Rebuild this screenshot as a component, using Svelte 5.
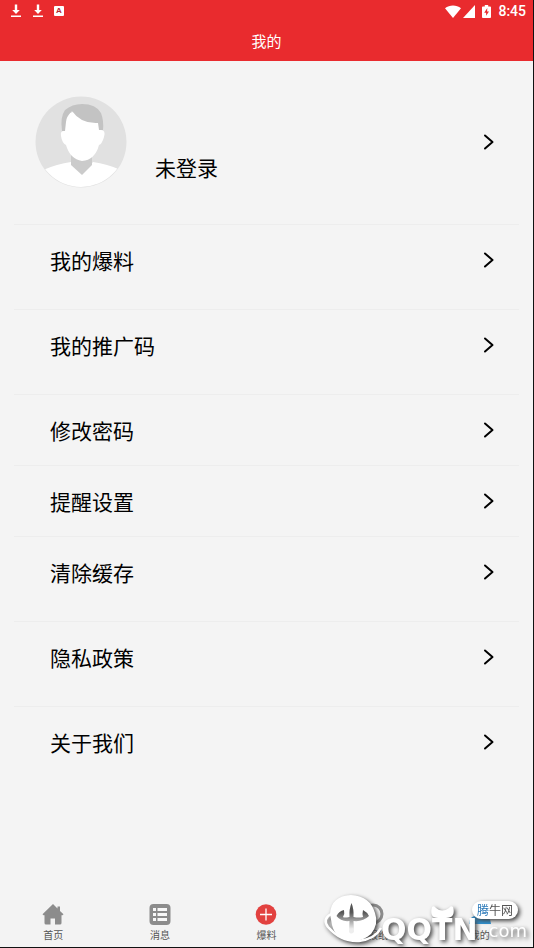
<script lang="ts">
    const groups = [
        ['我的爆料'],
        ['我的推广码'],
        ['修改密码', '提醒设置', '清除缓存'],
        ['隐私政策'],
        ['关于我们']
    ];
</script>

{#snippet chevron()}
    <svg class="chevron" viewBox="0 0 12 16" aria-hidden="true">
        <path d="M2 1.5 L9.5 8 L2 14.5" fill="none" stroke="#000" stroke-width="2" stroke-linecap="round" stroke-linejoin="round" />
    </svg>
{/snippet}

{#snippet download()}
    <svg width="12" height="14" viewBox="0 0 12 14" aria-hidden="true">
        <path d="M4.8 0.5h2.4v5.5h2.6L6 10 2.2 6h2.6zM1 11.5h10V13H1z" fill="#fff" />
    </svg>
{/snippet}

<div class="screen">
    <header>
        <div class="status">
            <div class="status-left">
                {@render download()}
                {@render download()}
                <span class="badge">A</span>
            </div>
            <div class="status-right">
                <svg width="16" height="13" viewBox="0 0 16 13"><path d="M0 3.2C4.6-.4 11.4-.4 16 3.2L8 13z" fill="#fff" /></svg>
                <svg width="12" height="13" viewBox="0 0 12 13"><path d="M12 0v13H0z" fill="#fff" /></svg>
                <svg class="battery" width="9" height="13" viewBox="0 0 9 13">
                    <path d="M2.8 0h3.4v1.4h1.9q.9 0 .9.9v9.8q0 .9-.9.9H.9q-.9 0-.9-.9V2.3q0-.9.9-.9h1.9z" fill="#fff" />
                    <path d="M5.3 3L2.2 7.7h1.9v3L7 6.4H5.1z" fill="#e92b2e" />
                </svg>
                <span class="time">8:45</span>
            </div>
        </div>
        <h1>我的</h1>
    </header>

    <main>
        <button class="profile">
            <svg class="avatar" viewBox="0 0 92 92" aria-hidden="true">
                <clipPath id="face"><circle cx="46" cy="46" r="45" /></clipPath>
                <circle cx="46" cy="46" r="45.5" fill="#e1e1e1" />
                <g clip-path="url(#face)">
                    <path d="M8 74 Q22 68 36 66 L47 78 L58 66 Q72 68 86 74 L80 92 H10z" fill="#fff" />
                    <path d="M36 55 H57 V69 L47 79 L36 69z" fill="#cbcbcb" />
                    <path d="M30 20 Q47 8 65 22 L66 34 Q71 34 69 41 Q67 48 64 49 Q60 64 47 65 Q35 63 31 49 Q27 47 26 40 Q25 35 29 35z" fill="#fff" />
                    <path d="M27 35 Q25 21 30 14 Q37 8 47 8 Q61 8 66 17 Q69 25 68 34 H64 L63 27 Q46 28 37 15 Q31 21 31 26 L30 35z" fill="#c3c3c3" />
                </g>
            </svg>
            <span class="user">未登录</span>
            {@render chevron()}
        </button>

        {#each groups as group}
            <div class="group">
                {#each group as label}
                    <button class="row">
                        <span>{label}</span>
                        {@render chevron()}
                    </button>
                {/each}
            </div>
        {/each}
    </main>

    <nav>
        <a href="#home">
            <svg viewBox="0 0 22 22"><path d="M11 1L.5 11.3l1 1H2.500V20q0 1.500 1.500 1.500h4.500V15.500h4.500v6H18q1.500 0 1.500-1.500v-7.700h1l1-1L18 8V3.500h-2.500v2z" fill="#8c8c8c" /></svg>
            <span>首页</span>
        </a>
        <a href="#news">
            <svg viewBox="0 0 22 22">
                <rect x="0.5" y="1" width="21" height="21" rx="4" fill="#8c8c8c" />
                <path d="M4 5h3v3H4zM8.5 5h9.5v3H8.500zM4 10h3v3H4zM8.500 10h9.500v3H8.500zM4 15h3v3H4zM8.500 15h9.500v3H8.500z" fill="#f8f8f8" />
            </svg>
            <span>消息</span>
        </a>
        <a href="#report">
            <svg viewBox="0 0 22 22">
                <circle cx="11" cy="11.5" r="10.3" fill="#e2413f" />
                <path d="M11 5.5v12M5 11.5h12" stroke="#fff" stroke-width="1.3" />
            </svg>
            <span>爆料</span>
        </a>
        <a href="#paper">
            <svg viewBox="0 0 22 22"><circle cx="11" cy="11" r="9" fill="none" stroke="#8c8c8c" stroke-width="3" /></svg>
            <span>读报纸</span>
        </a>
        <a href="#me">
            <svg viewBox="0 0 22 22"><path d="M0 21Q0 12 11 12T22 21z" fill="#2e94d6" /><circle cx="11" cy="9" r="6" fill="#2e94d6" /></svg>
            <span>我的</span>
        </a>
    </nav>

    <div class="watermark">
        <svg class="logo" viewBox="0 0 134 55" aria-hidden="true">
            <linearGradient id="fade" x1="0" y1="0" x2="0" y2="1">
                <stop offset="0.3" stop-color="#555" />
                <stop offset="0.85" stop-color="#eee" />
            </linearGradient>
            <path d="M7 22 Q8 4 28 3 Q47 4 52 21 Q56 32 48 42 Q39 50 28 49 Q12 47 9 33z" fill="#fff" />
            <path d="M8 22 Q-1 27 5 35 Q18 50 36 49 Q52 47 58 36" fill="none" stroke="#fff" stroke-width="2.5" />
            <path d="M28.5 11 Q26 17 26.5 25 Q21 26 20 25 Q22 22 21 18 Q16 19 13.5 24 Q18 30 26.5 29 L26 40 Q28 43 31 40 L30.5 29 Q40 30 46 24 Q44 20 40 18 Q39 22 40 25 Q36 26 30.5 25 Q31 17 28.5 11z" fill="url(#fade)" />
            <path d="M109 15 Q106 26 115 26 H123 Q133 26 130 15 Q128 13 126 16 Q119 21 113 16 Q111 13 109 15z" fill="#fff" />
        </svg>
        <span class="brand">QQTN</span>
        <span class="domain">.com</span>
        <span class="tag"><b>腾</b>牛网</span>
    </div>
</div>

<style>
    :global(body) {
        margin: 0;
        background: #f4f4f4;
    }

    .screen {
        position: relative;
        display: flex;
        flex-direction: column;
        min-height: 100vh;
        box-sizing: border-box;
        border-right: 1px solid #111;
        border-bottom: 1px solid #111;
        background: #f4f4f4;
        font-family: "Noto Sans", "Noto Sans CJK SC", sans-serif;
        color: #000;
    }

    header {
        height: 61px;
        background: #e92b2e;
        color: #fff;
    }

    .status,
    .status-left,
    .status-right {
        display: flex;
        align-items: center;
    }

    .status {
        justify-content: space-between;
        height: 22px;
        padding: 0 7px 0 10px;
    }

    .status-left {
        gap: 10px;
    }

    .badge {
        width: 10px;
        height: 10px;
        border-radius: 1px;
        background: #fff;
        color: #b3262f;
        font: bold 8px/10px "Liberation Sans", sans-serif;
        text-align: center;
    }

    .status-right {
        gap: 2px;
    }

    .battery {
        margin: 0 5px;
    }

    .time {
        font: 500 14px/22px Roboto, sans-serif;
    }

    h1 {
        margin: 0;
        font-size: 15px;
        font-weight: 400;
        line-height: 38px;
        text-align: center;
    }

    main {
        flex: 1;
        padding: 0 14px;
    }

    button {
        display: flex;
        align-items: center;
        width: 100%;
        border: 0;
        background: none;
        color: inherit;
        font: 21px/30px "Noto Sans CJK SC", sans-serif;
        text-align: left;
    }

    .profile {
        height: 163px;
        padding: 0 24px 2px 21px;
    }

    .avatar {
        width: 92px;
        height: 92px;
    }

    .user {
        margin: 50px 0 0 28px;
    }

    .chevron {
        width: 12px;
        height: 16px;
        margin-left: auto;
    }

    .group {
        margin-bottom: 14px;
    }

    .row {
        height: 71px;
        padding: 0 24px 0 36px;
        border-top: 1px solid #ededed;
    }

    nav {
        display: flex;
        height: 47px;
        background: #f3f3f3;
    }

    nav a {
        flex: 1;
        display: flex;
        flex-direction: column;
        align-items: center;
        padding-top: 3px;
        color: #555;
        font: 10px/20px "Noto Sans CJK SC", sans-serif;
        text-decoration: none;
    }

    nav svg {
        width: 22px;
        height: 22px;
    }

    /* site mark laid over the bottom bar */
    .watermark {
        position: absolute;
        right: 0;
        bottom: 0;
        width: 210px;
        height: 55px;
        color: #fff;
        filter: drop-shadow(2px 2px 2px #444);
    }

    .logo {
        position: absolute;
        left: 0;
        top: 0;
        width: 134px;
        height: 55px;
    }

    .brand,
    .domain,
    .tag {
        position: absolute;
    }

    .brand {
        left: 58px;
        bottom: 0;
        font: bold 30px/34px "DejaVu Sans", sans-serif;
    }

    .domain {
        right: 6px;
        bottom: 2px;
        font: 18px/28px "DejaVu Sans", sans-serif;
    }

    .tag {
        right: 15px;
        top: 9px;
        padding: 0 5px;
        border-radius: 9px;
        background: #fff;
        color: #555;
        font: 12px/18px "Noto Sans CJK SC", sans-serif;
    }

    .tag b {
        color: #2777b8;
        font-weight: 400;
    }
</style>
